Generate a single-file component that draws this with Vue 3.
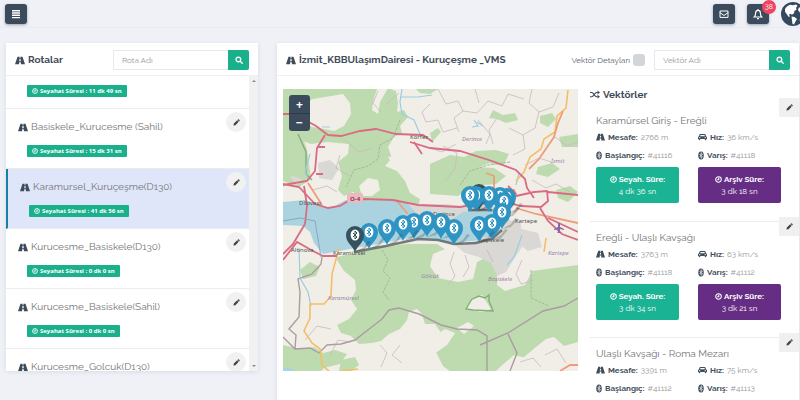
<script setup>
import { onMounted, ref } from 'vue'

const routes = [
  { name: 'Basiskele_Kurucesme', time: '11 dk 49 sn' },
  { name: 'Basiskele_Kurucesme (Sahil)', time: '15 dk 31 sn' },
  { name: 'Karamursel_Kuruçeşme(D130)', time: '41 dk 56 sn', active: true },
  { name: 'Kurucesme_Basiskele(D130)', time: '0 dk 0 sn' },
  { name: 'Kurucesme_Basiskele(Sahil)', time: '0 dk 0 sn' },
  { name: 'Kurucesme_Golcuk(D130)', time: '0 dk 0 sn' },
]

const vectors = [
  { name: 'Karamürsel Giriş - Ereğli', dist: '2766 m', speed: '36 km/s', from: '#41116', to: '#41118', travel: '4 dk 36 sn', archive: '3 dk 18 sn' },
  { name: 'Ereğli - Ulaşlı Kavşağı', dist: '3763 m', speed: '63 km/s', from: '#41118', to: '#41112', travel: '3 dk 34 sn', archive: '3 dk 21 sn' },
  { name: 'Ulaşlı Kavşağı - Roma Mezarı', dist: '3391 m', speed: '75 km/s', from: '#41112', to: '#41113', travel: '2 dk 42 sn', archive: '2 dk 38 sn' },
]

const pins = [
  { x: 479, y: 194, dark: true },
  { x: 476, y: 196 }, { x: 507, y: 198 }, { x: 500, y: 197 }, { x: 489, y: 196 }, { x: 470, y: 196 },
  { x: 504, y: 202 }, { x: 502, y: 213 }, { x: 492, y: 224 }, { x: 479, y: 226 },
  { x: 414, y: 223 }, { x: 403, y: 225 }, { x: 427, y: 221 }, { x: 441, y: 223 }, { x: 454, y: 229 },
  { x: 387, y: 229 }, { x: 369, y: 233 }, { x: 355, y: 236, dark: true },
]

const routeQuery = ref('')
const vectorQuery = ref('')
const details = ref(false)
const list = ref(null)

onMounted(() => {
  list.value.scrollTop = 27
})
</script>

<template>
  <div class="page">
    <svg class="sprite" aria-hidden="true">
      <symbol id="road" viewBox="0 0 16 14">
        <path fill-rule="evenodd" d="M4 1h8l4 12H9.5l-.2-3.2H6.7L6.5 13H0zM7.4 1l-.2 2.2h1.6L8.6 1zM7.1 4.6l-.3 3.5h2.4l-.3-3.5z" />
      </symbol>
      <symbol id="search" viewBox="0 0 16 16">
        <path fill="none" stroke="currentColor" stroke-width="2.6" stroke-linecap="round" d="M11.5 6.8a4.7 4.7 0 1 1-9.4 0 4.7 4.7 0 0 1 9.4 0zM10.4 10.4l4 4" />
      </symbol>
      <symbol id="clock" viewBox="0 0 16 16">
        <path fill="none" stroke="currentColor" stroke-width="2.4" d="M14.4 8A6.4 6.4 0 1 1 1.6 8a6.4 6.4 0 0 1 12.8 0zM8.6 4v4.7H5" />
      </symbol>
      <symbol id="pencil" viewBox="0 0 16 16">
        <path d="M1 15l1-4.5L9.5 3 13 6.5 5.5 14zM10.5 2l1-.9c.7-.6 1.3-.6 2 0l1.4 1.4c.7.7.7 1.3 0 2L14 5.5z" />
      </symbol>
      <symbol id="car" viewBox="0 0 18 14">
        <path fill-rule="evenodd" d="M4.5 1h9c.8 0 1.4.6 1.6 1.3L16 5.5c1.2.3 2 1.2 2 2.3V11h-1.5v1.2a1.5 1.5 0 0 1-3 0V11h-9v1.2a1.5 1.5 0 0 1-3 0V11H0V7.8c0-1.1.8-2 2-2.3l.9-3.2C3.1 1.6 3.7 1 4.5 1zM5 2.8l-.7 2.6h9.4L13 2.800zM3.5 7a1.3 1.3 0 1 0 0 2.6 1.3 1.3 0 0 0 0-2.6zm11 0a1.3 1.3 0 1 0 0 2.6 1.3 1.3 0 0 0 0-2.6z" />
      </symbol>
      <symbol id="bluetooth" viewBox="0 0 12 16">
        <ellipse cx="6" cy="8" rx="5.5" ry="8" />
        <path fill="none" stroke="#fff" stroke-width="1.3" d="M3 5l6 6-3 2.700V2.300L9 5l-6 6" />
      </symbol>
      <symbol id="shuffle" viewBox="0 0 18 14">
        <path fill="none" stroke="currentColor" stroke-width="2" d="M0 3.500h3c4 0 5 7.500 9 7.500h2M0 11h3c4 0 5-7.500 9-7.500h2" />
        <path d="M13.500 0L18 3.500 13.500 7zM13.500 7.500L18 11l-4.500 3z" />
      </symbol>
    </svg>

    <header class="topbar">
      <button class="square" type="button" aria-label="Menü">
        <svg class="glyph" viewBox="0 0 12 12"><path d="M2 2h8v1.500H2zM2 4.300h8v1.500H2zM2 6.600h8v1.500H2zM2 8.900h8v1.300H2z" /></svg>
      </button>
      <nav class="actions">
        <button class="square" type="button" aria-label="Mesajlar">
          <svg class="glyph" viewBox="0 0 12 12"><path fill="none" stroke="currentColor" d="M2 3h8v6.400H2zM2 4.600l4 2.900 4-2.900" /></svg>
        </button>
        <button class="square" type="button" aria-label="Bildirimler">
          <svg class="glyph" viewBox="0 0 12 12"><path fill="none" stroke="currentColor" stroke-width="1.200" d="M2.300 9C3.600 7.800 3.500 6.500 3.600 5c.1-1.700 1-2.700 2.400-2.700S8.300 3.300 8.400 5c.1 1.500 0 2.800 1.300 4zM6 1v1.300M5 10.600h2" /></svg>
          <span class="count">38</span>
        </button>
        <button class="globe" type="button" aria-label="Dil">
          <svg viewBox="0 0 24 24"><circle cx="12" cy="12" r="12" fill="#34495e" /><path fill="#fff" d="M4 7c1.200-2 3-3.500 5-4.200l3 .4 3-.6 1.500 1.200-1.500 2 .5 2-2 1-.5 2.500-2 1.500-1.500-1-1.500.7 1 2-1.500.2-2-3-1.500-2zM10.500 14.500l3 .5 2.500 2-1.500 2.500-1.500 3-1.500-.5-.5-3.500zM18 5l2.500 2.500 1.500 4-1.500 1-2-2.500-1.500-2zM20 15l1.500 1-2 3.500-1-1.500z" /></svg>
        </button>
      </nav>
    </header>

    <main class="columns">
      <section class="panel routes">
        <div class="head">
          <h2><svg class="road"><use href="#road" /></svg>Rotalar</h2>
          <form class="search" @submit.prevent>
            <input v-model="routeQuery" type="text" placeholder="Rota Adı" aria-label="Rota Adı" />
            <button type="submit" aria-label="Ara"><svg><use href="#search" /></svg></button>
          </form>
        </div>
        <div class="scroller">
          <ul ref="list">
            <li v-for="r in routes" :key="r.name" :class="{ active: r.active }">
              <div class="info">
                <a href="#"><svg class="road"><use href="#road" /></svg>{{ r.name }}</a>
                <span class="badge"><svg><use href="#clock" /></svg>Seyahat Süresi : {{ r.time }}</span>
              </div>
              <button class="edit" type="button" aria-label="Düzenle"><svg><use href="#pencil" /></svg></button>
            </li>
          </ul>
          <div class="track"><i class="up"></i><i class="down"></i></div>
        </div>
      </section>

      <section class="panel detail">
        <div class="head">
          <h2><svg class="road"><use href="#road" /></svg>İzmit_KBBUlaşımDairesi - Kuruçeşme _VMS</h2>
          <label class="check">Vektör Detayları<input v-model="details" type="checkbox" /></label>
          <form class="search" @submit.prevent>
            <input v-model="vectorQuery" type="text" placeholder="Vektör Adı" aria-label="Vektör Adı" />
            <button type="submit" aria-label="Ara"><svg><use href="#search" /></svg></button>
          </form>
        </div>

        <div class="body">
          <div class="map">
            <svg viewBox="283 89 295 282" preserveAspectRatio="xMidYMid slice" role="img" aria-label="Harita">
              <rect x="283" y="89" width="295" height="282" fill="#f1eee8" />
              <g fill="#bedbb0">
                <path d="M283 89h94l-3 9-2 12 6 4 2-12 8-14 8 3 2 12-1 9 7-2 4 7-8 9 2 7-8 4-6 10 4 11-7 8 12 5 8 10 5 12 10 6-2 9-60-2 3-10-8-4-9 4-6-6 4-14-4-14 10-8 1-10-22-2-16 2-20-7-9-12-14-14zM283 125l16 4 8 20 4 30-12 8-16-6z" />
                <path d="M416 89h22l-8 5-10-1zM493 110l10 5 12-2 3 7-12 3-9-4-8-1zM540 116l12-3 4 6-8 8-8-4zM559 137l19-3v13l-16 0zM430 133l8-5 3 4-9 10zM430 164l20-9 14 2 12-6 20-1 13 4-6 12-14-3-18 8-12 14-12-2-17 4zM538 167l14-4 8 6-12 8-12-3zM556 190l14-4 8 6-10 10-10-4zM430 170l30-4 34 2 12 8-10 8-22 2-16 10-28-2z" />
                <path d="M337 257l40-9 30-4 30 0 8 5-12 5-3 12 8 12 20 4 15-3 4-17 10-5 12-1 8 7-10 10 0 12 8 6 20-6 7-14 46-6v86l-14 5-22-2-16 4-12-3-14 12-8 8h-37l-12-9-8-16 8-14-8-12-10 0-3-10-5-5-8 3-2 8-7 9-11 5-8 7-9 2-13 1-8-8-10-3-4-8 12-6 8-10-6-9 5-10-1-10-11-9-7-11zM283 345l17 4 14-2 9 6 12-3 12 4-7 10-16 4-3 3h-38zM300 270l10-8 10 5-4 9-13 3zM341 360l14-3 4 8-8 6h-12z" />
              </g>
              <path fill="#f1eee8" d="M304 104l9-5 30-5 7 9 1 11-7 12-10 5-9-2-13-2-9-9zM388 157l14-2 14 4 5 10-10 5-14-3zM359 186l9-8 10 2 2 10-8 6-10 0zM466 309l6-11 10-3 9 14-9 3zM433 337l12-8 10 4-8 12-13 9-9-4zM457 328l11-6 6 4-10 8zM518 362l18-15 10-8 8-2 10 9 14-4v27h-58zM387 339l8-7 12-1 2-14 8 11-2 11 14 9-8 23h-30z" />
              <path fill="#d9d8d5" d="M318 163l12-3 9 8-7 12-13-2zM290 175l12 4-6 7zM405 204l41 0 24 3 16-4 16 6 8 11-6 22-26 7-20-28-30 0-14-6zM455 245l27-4 24-20 14-1 4 24-8 12-10 16-9 4-6-13-12-6-14-4zM518 228l20 5 4 14-14 4-10-8z" />
              <path fill="#aad3df" d="M283 202l22-2 12 4 14 4 15-8 50 1 12 3 9 10 10 5 24 1 12-8 18-3 17 0 6 8-8 17-23 7-22 2-20-4-22-1-26 5-28 5-32 6-9-11-4-11-7-6-20-1zM283 368h8l3 3h-11z" />
              <g fill="none" stroke="#c8b9bd" stroke-width=".8">
                <path d="M378 91l-5 12 8 9M385 105l14-12M430 104l-8 8 4 10 12-2 5 12 14-4M438 89l8 15 12-3 5 10-9 7 5 14M463 111l14 2 11-12 14 5 6-12 16 5M475 89l4 14M497 118l-8 12 4 14M509 128l14 7 12-7 4-16-10-9 3-14M523 135l2 14-12 6M539 112l14-5 6-14M555 137l12 9 11-4M522 260l-6 14 5 10 13-4M454 252l-4 12 5 12-7 9M313 190l14-4 10 6M345 140l14 12 13-4M340 155l-4 13 14 8M478 120l12 14-4 10M443 146l14 7-2 16-10 12M525 165l14-7 12 4M532 180l14 8 10-4 14 8M430 148l12 4 14-8" />
                <path d="M305 340l12-14 14 3M330 355l8-15 13 2M380 345l7 8-6 14M400 345l-8 10 10 8M520 362l13-4 8 9M545 355l12-6 9 14M465 255l4 12-6 10M487 250l6 12" />
              </g>
              <path fill="none" stroke="#a2b99b" stroke-dasharray="3 1" d="M400 120l-7 18-13 7-2 14-10 7-14 4-8 17M382 250l6 10-5 11 7 7-7 14 6 8M531 270v28l18 8M510 162l-22 3-18 6-10 14" />
              <path fill="none" stroke="#a99da0" stroke-width="1.400" d="M295 349l1-14-7-6 10-12 1-25-2-13 14-5 9-10 1-7M283 337l12 12 15-1 9 5 8-8 14-1 14-4 9-7 18-14 7-9 10-2 20 6 22 11 16 4 20 1 10 6v35l-4 10M480 345l28-12 35-22 21-5 14-8M508 334l9 19-7 18" />
              <path fill="none" stroke="#80b078" stroke-width="1.400" d="M298 134l8 18 0 22 6 6M466 309l6-10 7-3 6 2 4-3v6l4 10-20-1z" />
              <path fill="none" stroke="#9fcbdf" stroke-width="1.200" d="M402 89l-2 13 2 12 12 6 6 14M400 97h18l14-2M474 120l4 6-6 1m5-5 6 4M299 248l1 30 8 14 3 14M522 235l-8 22-7 8M519 173l-3 12M322 127h8M310 154l-5 18 4 8" />
              <path fill="none" stroke="#f4be68" stroke-width="1.600" d="M339 248l-7 26-1 22-7 8h-14l0 14-6 13 8 12 8 6 2 16 7 6M340 371l18-2M546 238l-2 14M568 90l-2 18-9 8-2 16-11 7-3 10-11 8-6 15-8 9" />
              <path fill="none" stroke="#ee9d77" stroke-width="1.800" d="M563 111l-5 12-4 14-15 22-10 10M486 173l8 3v14h20l3 7M308 183l14 22M396 200l12 14M516 208l20 6 42 9M560 371l10-6h8" />
              <g fill="none" stroke="#d96b82" stroke-width="1.800">
                <path d="M283 114h11l22 12 12 9 13 1 19-5 16-2 20 5 27 1 10 7M410 142l20 6 30 3 32 10 24 9 9 9 2 9 7 10" />
                <path d="M325 135l-8 13-2 23-8 10-24 4M283 184l16 3 16 17 13 4 12-2 10-6 15-1 28 1 25 5 42 2 22-4M516 196l18-4 13-1 1 10-7 6-20-1-12-3M548 192l30 3M540 208l8 13 14 13 16 6M548 218l30 14" />
                <path d="M304 186l3 20-2 18M283 254l10-10 12-20M283 260l14-18 16 9 10 5h14M316 174l7 0M317 147l8 0M414 142l8 12M508 186l8 8" />
              </g>
              <path fill="none" stroke="#89a6c1" d="M283 221l17-3 15 3 6 36" />
              <path fill="none" stroke="#4b5558" stroke-width="2.400" opacity=".75" d="M354 252l32-6 32-7 20 1 16 4 22-1 16-4 10-9M468 210h24" />
              <rect x="347" y="193" width="16" height="10" rx="2" fill="#edb9c1" />
              <g class="places">
                <text x="350" y="201" class="shield">O-4</text>
                <text x="299" y="205">Dilovası</text>
                <text x="410" y="139">Körfez</text>
                <text x="462" y="141" class="soft">Derince</text>
                <text x="551" y="163" class="soft">İzmit</text>
                <text x="433" y="216">Derince</text>
                <text x="515" y="223">Kartepe</text>
                <text x="291" y="252">Altınova</text>
                <text x="333" y="255">Karamürsel</text>
                <text x="478" y="242">Başiskele</text>
                <text x="328" y="300" class="soft">Karamürsel</text>
                <text x="421" y="278" class="soft">Gölcük</text>
                <text x="488" y="281" class="soft">Başiskele</text>
                <text x="548" y="255" class="soft">Kartepe</text>
              </g>
              <path fill="#8a65aa" d="M558 223h2v4l4 2v1l-4-1v3l1 1h-4l1-1v-3l-4 1v-1l4-2z" />
              <g v-for="(p, i) in pins" :key="i" :transform="`translate(${p.x} ${p.y})`">
                <path fill="#333" opacity=".25" d="M0 16l9-5 4-6 3 1-7 8z" />
                <path :fill="p.dark ? '#36525f' : '#2d94c4'" d="M0 16C-2 10-9 7-9-1a9 9 0 0 1 18 0C9 7 2 10 0 16z" />
                <ellipse cy="-1" rx="4.400" ry="5.600" fill="#fff" />
                <path fill="none" :stroke="p.dark ? '#36525f' : '#2d94c4'" d="M-2-3l4 4-2 2v-8l2 2-4 4" />
              </g>
            </svg>
            <div class="zoom">
              <button type="button" aria-label="Yakınlaştır">+</button>
              <button type="button" aria-label="Uzaklaştır">−</button>
            </div>
          </div>

          <aside class="vectors">
            <h3><svg class="road"><use href="#shuffle" /></svg>Vektörler</h3>
            <article v-for="v in vectors" :key="v.name">
              <button class="tab" type="button" aria-label="Düzenle"><svg><use href="#pencil" /></svg></button>
              <h4>{{ v.name }}</h4>
              <div class="grid">
                <p><svg><use href="#road" /></svg><b>Mesafe:</b> {{ v.dist }}</p>
                <p><svg><use href="#car" /></svg><b>Hız:</b> {{ v.speed }}</p>
                <p><svg class="slim"><use href="#bluetooth" /></svg><b>Başlangıç:</b> {{ v.from }}</p>
                <p><svg class="slim"><use href="#bluetooth" /></svg><b>Varış:</b> {{ v.to }}</p>
                <button class="time" type="button"><b><svg><use href="#clock" /></svg>Seyah. Süre:</b><span>{{ v.travel }}</span></button>
                <button class="time archive" type="button"><b><svg><use href="#clock" /></svg>Arşiv Süre:</b><span>{{ v.archive }}</span></button>
              </div>
            </article>
          </aside>
        </div>
      </section>
    </main>
  </div>
</template>

<style>
body { background: #f0f1f7; }
</style>

<style scoped>
* { box-sizing: border-box; }
.page {
  height: 100vh;
  overflow: hidden;
  background: #f0f1f7;
  color: #3f4d5b;
  font: 10px/16px Raleway, Lato, "Open Sans", sans-serif;
}
.sprite { position: absolute; width: 0; height: 0; }
svg { fill: currentColor; }
button, input { font: inherit; margin: 0; padding: 0; border: 0; }
button { cursor: pointer; display: flex; align-items: center; justify-content: center; }
h2, h3, h4, p, ul { margin: 0; padding: 0; }

.topbar {
  display: flex;
  justify-content: space-between;
  align-items: center;
  height: 28px;
  padding-left: 5px;
  border-bottom: 1px solid #eaebf1;
}
.actions { display: flex; align-items: center; gap: 12px; margin-right: -4px; }
.square {
  position: relative;
  width: 22px;
  height: 20px;
  border-radius: 3px;
  background: #3b4b5c;
  color: #fff;
  box-shadow: 0 1px 3px #9aa3b0;
}
.glyph { width: 12px; height: 12px; }
.count {
  position: absolute;
  top: -4px;
  right: -7px;
  width: 14px;
  height: 14px;
  border-radius: 50%;
  background: #ee4560;
  color: #fff;
  font-size: 7px;
  line-height: 14px;
}
.globe { width: 23px; height: 24px; background: none; }
.globe svg { flex: none; width: 24px; height: 24px; }

.columns { display: flex; align-items: flex-start; gap: 19px; padding: 15px 1px 0 6px; }
.panel { background: #fff; box-shadow: 0 1px 4px #d8dae3; }
.routes { flex: 0 0 252px; }
.detail { flex: 1; min-width: 0; }
.head {
  display: flex;
  align-items: center;
  height: 33px;
  padding: 2px 9px 0;
  border-bottom: 1px solid #eeeff2;
}
h2, h3 { flex: 1; display: flex; align-items: center; gap: 3px; font-size: 10px; font-weight: 700; white-space: nowrap; }
.road { width: 10px; height: 9px; flex: none; }
.search { display: flex; height: 20px; flex: 0 0 136px; min-width: 0; }
.search input {
  flex: 1;
  min-width: 0;
  padding: 0 8px;
  border: 1px solid #e8e9ec;
  border-right: 0;
  background: #fff;
  font-size: 8px;
}
.search input::placeholder { color: #999; opacity: 1; }
.search button { width: 21px; border-radius: 0 2px 2px 0; background: #1ab08c; color: #fff; }
.search svg { width: 8px; height: 8px; }
.check { display: flex; align-items: center; gap: 3px; margin-right: 9px; color: #56606a; font-size: 8px; }
.check input { appearance: none; width: 12px; height: 12px; border-radius: 3px; background: #d3d6d8; }

.scroller { display: flex; height: 295px; overflow: hidden; }
.scroller ul { flex: 1; overflow-y: auto; scrollbar-width: none; list-style: none; }
.scroller li {
  display: flex;
  justify-content: space-between;
  height: 60px;
  padding: 3px 3px 0 12px;
  border-bottom: 1px solid #ececef;
}
.scroller li.active { border-left: 2px solid #1a7fa8; background: #dfe6fa; }
.info { display: flex; flex-direction: column; align-items: flex-start; padding-top: 7px; gap: 10px; }
.info a { display: flex; align-items: center; gap: 3px; color: #757575; font-size: 10px; text-decoration: none; }
.info .road { color: #3f4d5b; }
.badge {
  display: flex;
  align-items: center;
  gap: 2px;
  height: 12px;
  margin-left: 9px;
  padding: 0 5px;
  border-radius: 1px;
  background: #1ab08c;
  color: #fff;
  font: 700 6px/12px "Open Sans", sans-serif;
}
.badge svg { width: 6px; height: 6px; }
.edit { width: 20px; height: 20px; border-radius: 50%; background: #f1f1f2; color: #444; }
.edit svg, .tab svg { width: 7px; height: 7px; }
.track {
  display: flex;
  flex-direction: column;
  justify-content: space-between;
  align-items: center;
  flex: 0 0 9px;
  padding: 4px 0;
  background: #f1f1f2;
}
.track i { border: 2px solid transparent; }
.track .up { border-top: 0; border-bottom-color: #888; }
.track .down { border-bottom: 0; border-top-color: #888; }

.body { display: flex; align-items: flex-start; gap: 12px; padding: 13px 0 0 6px; min-height: 400px; }
.map { position: relative; flex: 1; height: 282px; }
.map > svg { display: block; width: 100%; height: 100%; }
.places { font: 6px "Noto Sans", sans-serif; fill: #555; }
.places .soft { fill: #9b83a6; font-style: italic; }
.places .shield { fill: #863d53; font-weight: 700; }
.zoom { position: absolute; top: 6px; left: 6px; border-radius: 3px; overflow: hidden; }
.zoom button { width: 21px; height: 18px; background: #3b4b5c; color: #fff; font: 700 12px "Open Sans", sans-serif; }
.zoom button + button { border-top: 1px solid #2c3947; }

.vectors { flex: 0 0 209px; }
h3 { height: 11px; margin-bottom: 3px; }
article { position: relative; height: 116px; padding: 7px 18px 0 6px; border-bottom: 1px solid #ededf0; }
article:first-of-type { height: 119px; padding-top: 9px; }
h4 { padding-top: 1px; color: #757575; font-size: 10px; font-weight: 400; }
.grid { display: grid; grid-template-columns: 1fr 1fr; column-gap: 19px; row-gap: 2px; }
.grid p { display: flex; align-items: center; gap: 3px; height: 16px; color: #969696; font-size: 8px; white-space: nowrap; }
.grid p b { color: #3f4d5b; }
.grid p svg { width: 9px; height: 8px; color: #3f4d5b; }
.grid p svg.slim { width: 6px; height: 9px; }
.time {
  flex-direction: column;
  height: 36px;
  margin-top: 2px;
  border-radius: 2px;
  background: #1ab394;
  color: #fff;
  font-size: 8px;
  line-height: 12px;
}
.time b { display: flex; align-items: center; gap: 2px; }
.time svg { width: 7px; height: 7px; }
.archive { background: #662d84; }
.tab { position: absolute; top: -5px; right: 0; width: 20px; height: 19px; background: #f0f0f1; color: #444; }
</style>
